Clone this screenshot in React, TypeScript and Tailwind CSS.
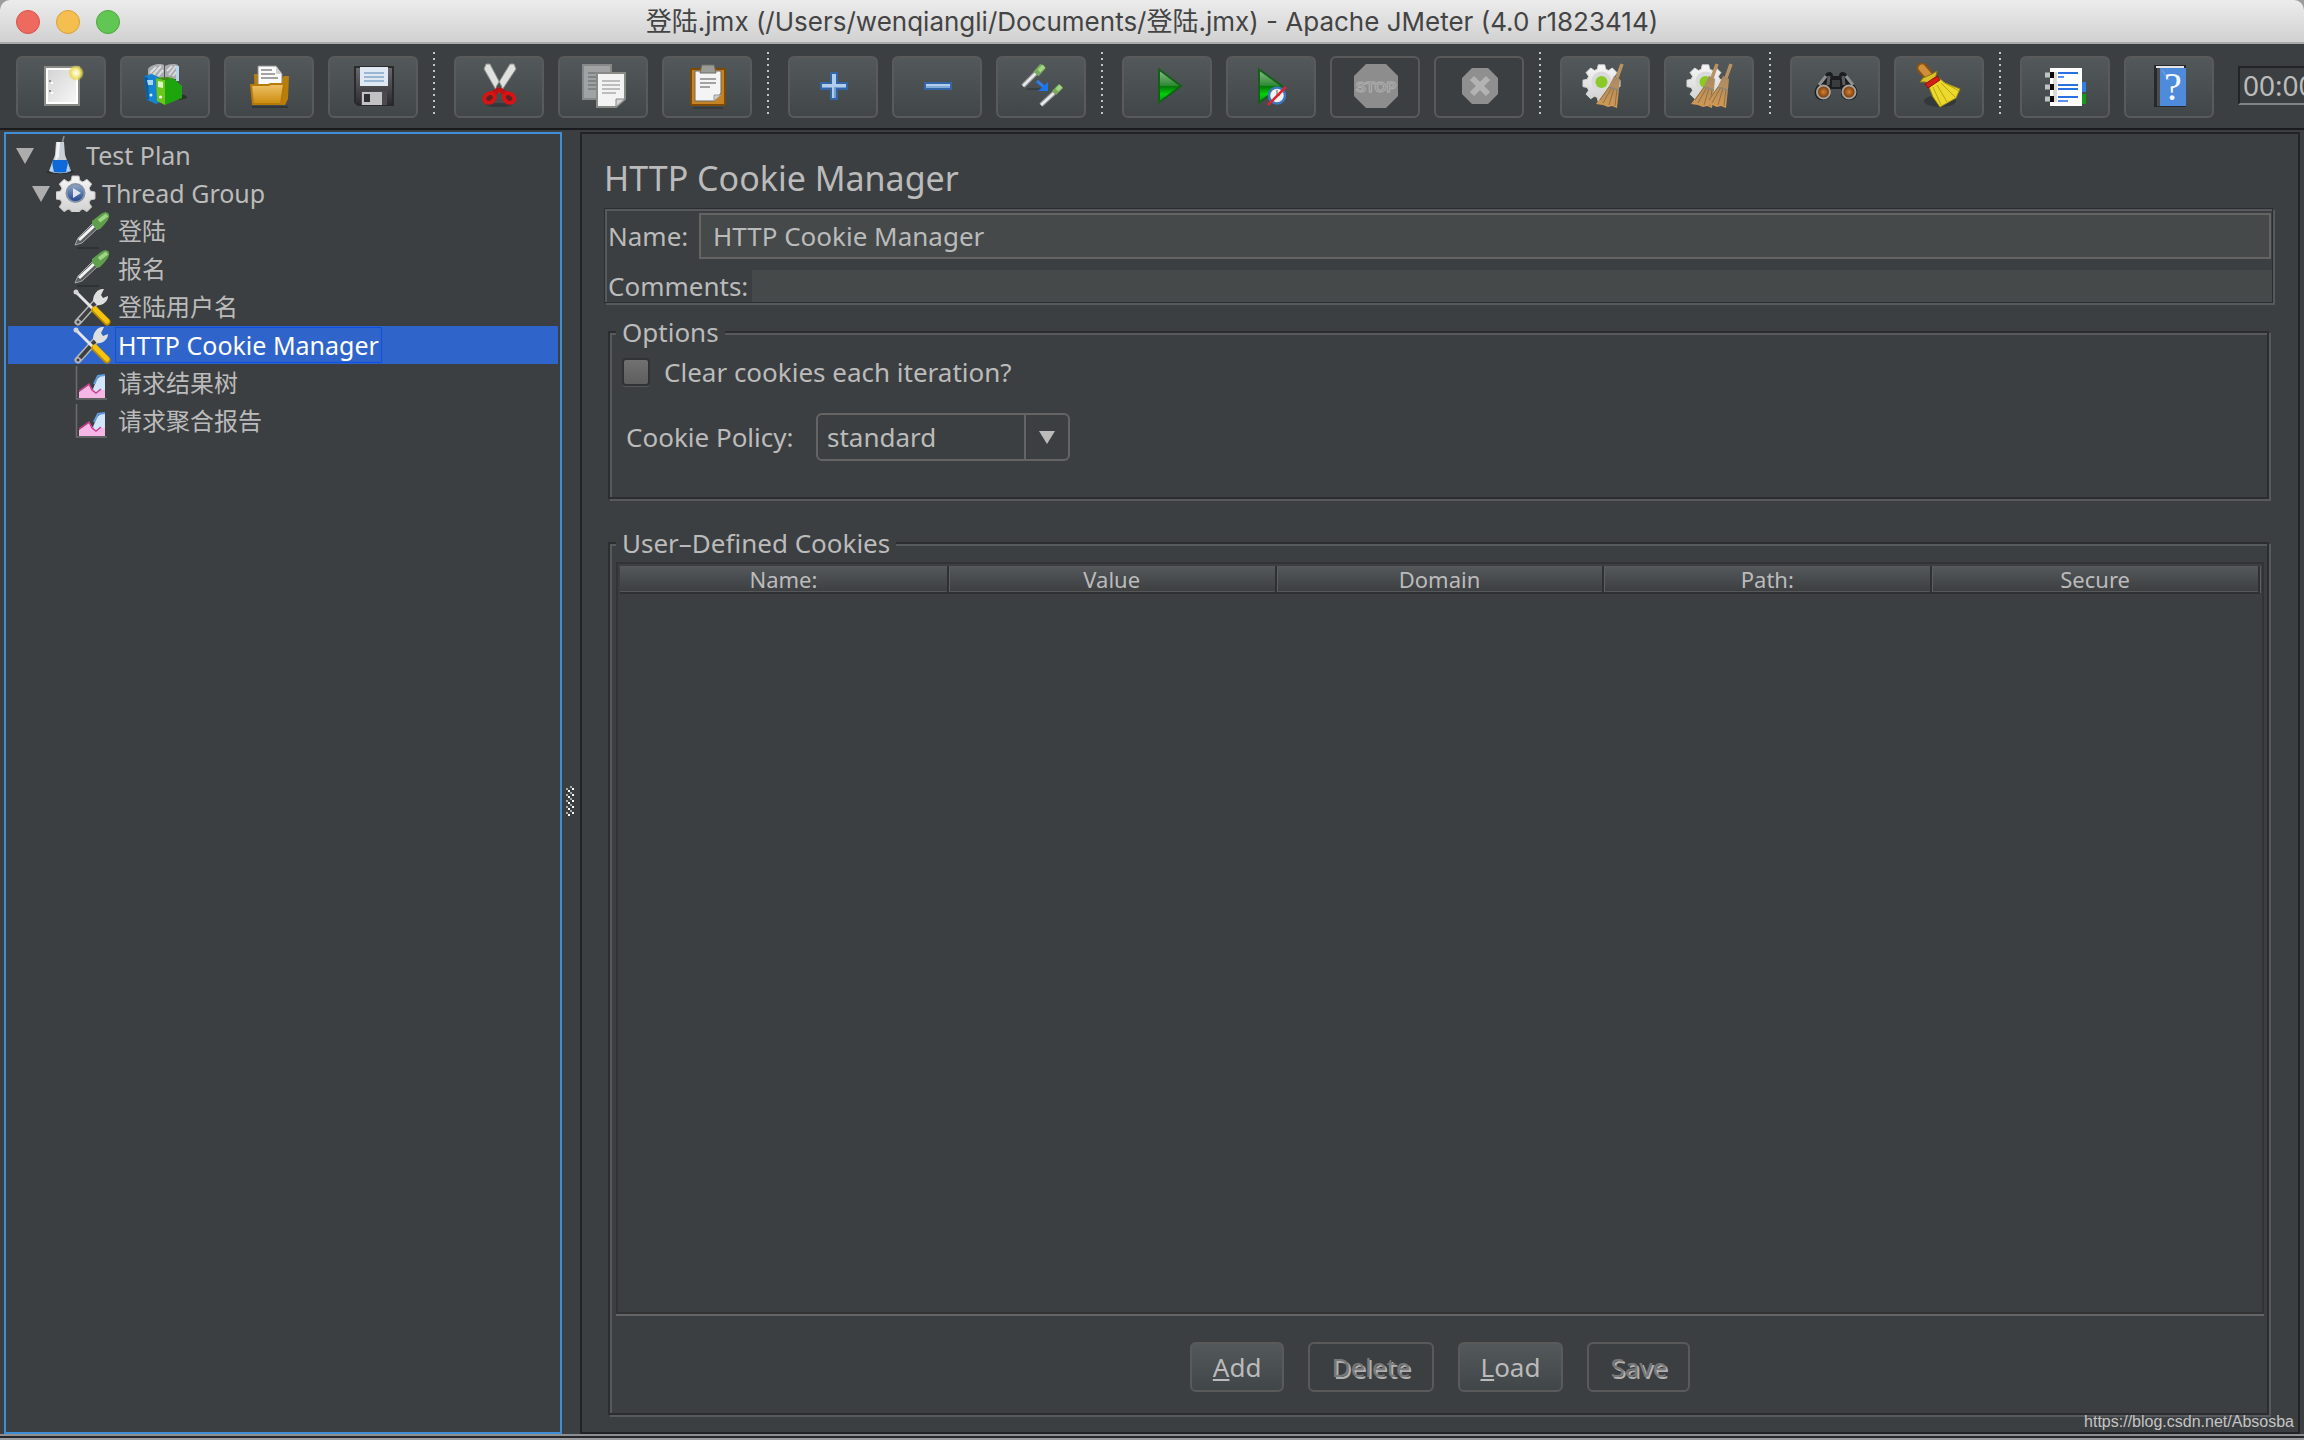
import { type ReactNode, useState } from "react";

const GEAR =
  "M-3.4-17h6.8l1 4.600 3 1.300 4-2.600 4.800 4.800-2.600 4 1.300 3 4.600 1v6.800l-4.600 1-1.300 3 2.600 4-4.800 4.800-4-2.600-3 1.300-1 4.600h-6.800l-1-4.600-3-1.300-4 2.600-4.800-4.800 2.600-4-1.300-3-4.600-1v-6.800l4.600-1 1.300-3-2.600-4 4.800-4.800 4 2.600 3-1.300z";

export default function App() {
  return (
    <div className="flex h-screen flex-col overflow-hidden bg-[#3c3f41] font-['Noto_Sans','Noto_Sans_CJK_SC',sans-serif] text-[#bbbbbb]">
      <IconDefs />
      <TitleBar />
      <Toolbar />
      <div className="flex min-h-0 flex-1 border-t-2 border-[#1a1b1c] pt-[2px] pr-1 pl-1">
        <TestTree />
        <Splitter />
        <CookieManager />
      </div>
      <div className="h-[6px] shrink-0 border-y-2 border-t-[#8b8d8e] border-b-[#9c9d9e] bg-[#25272a]" />
      <p className="absolute right-[10px] bottom-2 font-['Liberation_Sans',Arial,sans-serif] text-base leading-5 text-[#c4c4c4]">
        https://blog.csdn.net/Absosba
      </p>
    </div>
  );
}

function TitleBar() {
  return (
    <header className="h-11 shrink-0 bg-[#9a9c9d]">
      <div className="grid h-full grid-cols-[1fr_auto_1fr] items-center rounded-t-[10px] border-b-2 border-[#a9abab] bg-linear-to-b from-[#ececec] to-[#d1d1d1] px-4 pt-[2px]">
        <div className="flex gap-4">
          <button
            type="button"
            aria-label="Close"
            className="size-6 rounded-full border border-[#d6534b] bg-[#ee6a5f]"
          />
          <button
            type="button"
            aria-label="Minimize"
            className="size-6 rounded-full border border-[#d9a036] bg-[#f5bf4f]"
          />
          <button
            type="button"
            aria-label="Zoom"
            className="size-6 rounded-full border border-[#4fa73c] bg-[#62c655]"
          />
        </div>
        <h1 className="font-[Inter,'Noto_Sans_CJK_SC',sans-serif] text-[26px] leading-8 text-[#444444]">
          登陆.jmx (/Users/wenqiangli/Documents/登陆.jmx) - Apache JMeter (4.0
          r1823414)
        </h1>
      </div>
    </header>
  );
}

function Toolbar() {
  return (
    <div
      role="toolbar"
      className="flex h-[84px] shrink-0 items-start gap-[14px] overflow-hidden pt-3 pl-4">
      <ToolButton label="New">
        <NewIcon />
      </ToolButton>
      <ToolButton label="Templates">
        <TemplatesIcon />
      </ToolButton>
      <ToolButton label="Open">
        <OpenIcon />
      </ToolButton>
      <ToolButton label="Save">
        <SaveIcon />
      </ToolButton>
      <ToolSeparator />
      <ToolButton label="Cut">
        <CutIcon />
      </ToolButton>
      <ToolButton label="Copy">
        <CopyIcon />
      </ToolButton>
      <ToolButton label="Paste">
        <PasteIcon />
      </ToolButton>
      <ToolSeparator />
      <ToolButton label="Expand All">
        <path
          d="M22 10h6v10h10v6H28v10h-6V26H12v-6h10z"
          fill="#b3cdec"
          stroke="#3465a4"
          strokeWidth="2"
        />
        <path d="M13 24h10v1H13zM27 24h10v1H27zM25 24h2v11h-2z" fill="#729fcf" />
      </ToolButton>
      <ToolButton label="Collapse All">
        <path
          d="M12 20h26v6H12z"
          fill="#b3cdec"
          stroke="#3465a4"
          strokeWidth="2"
        />
        <path d="M13 23h24v2H13z" fill="#82abd9" />
      </ToolButton>
      <ToolButton label="Toggle">
        <ToggleIcon />
      </ToolButton>
      <ToolSeparator />
      <ToolButton label="Start">
        <path
          d="M16 6.500 38 23 16 39.500z"
          fill="url(#play)"
          stroke="#14601a"
          strokeWidth="2"
        />
      </ToolButton>
      <ToolButton label="Start no pauses">
        <path
          d="M12 6.500 35 23 12 39.500z"
          fill="url(#play)"
          stroke="#14601a"
          strokeWidth="2"
        />
        <circle cx="30" cy="32.500" r="8" fill="#f1f1f1" stroke="#3b78bd" strokeWidth="2.500" />
        <path d="M30 27v5h3" fill="none" stroke="#a9a9a9" strokeWidth="2" />
        <path d="M21 42 39 24" stroke="#dc2430" strokeWidth="2.500" />
      </ToolButton>
      <ToolButton label="Stop" disabled>
        <path d="M15 1h20l12 12v20L35 45H15L3 33V13z" fill="#8d8d8d" />
        <text
          x="25"
          y="29"
          textAnchor="middle"
          fill="#8d8d8d"
          stroke="#b0b0b0"
          strokeWidth="1"
          className="font-['Liberation_Sans',Arial,sans-serif] text-[15px] font-bold">
          STOP
        </text>
      </ToolButton>
      <ToolButton label="Shutdown" disabled>
        <path d="M17 5h16l10 10v16L33 41H17L7 31V15z" fill="#8f8f8f" />
        <path
          d="m17 15 16 16m0-16L17 31"
          stroke="#b3b3b3"
          strokeWidth="6"
        />
      </ToolButton>
      <ToolSeparator />
      <ToolButton label="Clear">
        <GearWithDot />
        <Whisk x={0} />
      </ToolButton>
      <ToolButton label="Clear All">
        <GearWithDot />
        <Whisk x={-9} />
        <Whisk x={5} />
      </ToolButton>
      <ToolSeparator />
      <ToolButton label="Search">
        <SearchIcon />
      </ToolButton>
      <ToolButton label="Reset Search">
        <BroomIcon />
      </ToolButton>
      <ToolSeparator />
      <ToolButton label="Function Helper Dialog">
        <NotebookIcon />
      </ToolButton>
      <ToolButton label="Help">
        <HelpIcon />
      </ToolButton>
      <output className="mt-[10px] ml-[10px] h-[39px] shrink-0 border-2 border-[#222426] border-b-[#7f8487] px-[3px] text-[28px] leading-[35px]">
        00:00:00
      </output>
    </div>
  );
}

function ToolButton({
  label,
  disabled = false,
  children,
}: {
  label: string;
  disabled?: boolean;
  children: ReactNode;
}) {
  return (
    <button
      type="button"
      aria-label={label}
      disabled={disabled}
      className="flex h-[62px] w-[90px] shrink-0 items-center justify-center rounded-md border-2 border-[#5a5a5a] bg-linear-to-b from-[#53585a] to-[#414648] disabled:bg-none">
      <svg viewBox="0 0 48 48" className="size-12">
        {children}
      </svg>
    </button>
  );
}

function ToolSeparator() {
  return (
    <svg viewBox="0 0 8 64" className="-mt-1 h-16 w-2 shrink-0">
      <path d="M2 0v64" stroke="#c2c4c5" strokeWidth="2" strokeDasharray="2 4" />
    </svg>
  );
}

// Gradients shared by the toolbar and tree icons
function IconDefs() {
  return (
    <svg className="absolute size-0">
      <defs>
        <linearGradient id="play" x1="0" y1="0" x2="0" y2="1">
          <stop offset="0" stopColor="#8cbf8e" />
          <stop offset="0.48" stopColor="#2f8a33" />
          <stop offset="0.52" stopColor="#027a05" />
          <stop offset="0.75" stopColor="#04cf0a" />
          <stop offset="1" stopColor="#0d8a12" />
        </linearGradient>
        <linearGradient id="page" x1="0" y1="0" x2="1" y2="1">
          <stop offset="0" stopColor="#d4d4d4" />
          <stop offset="1" stopColor="#f6f6f6" />
        </linearGradient>
        <linearGradient id="folder" x1="0" y1="0" x2="0" y2="1">
          <stop offset="0" stopColor="#eec269" />
          <stop offset="1" stopColor="#cb8b0c" />
        </linearGradient>
        <linearGradient id="floppy" x1="0" y1="0" x2="0" y2="1">
          <stop offset="0" stopColor="#6a6a6e" />
          <stop offset="1" stopColor="#2c2a2d" />
        </linearGradient>
        <linearGradient id="straw" x1="0" y1="0" x2="0" y2="1">
          <stop offset="0" stopColor="#a98963" />
          <stop offset="1" stopColor="#d19a55" />
        </linearGradient>
        <linearGradient id="gear" x1="0" y1="0" x2="0" y2="1">
          <stop offset="0" stopColor="#f7f7f7" />
          <stop offset="1" stopColor="#cfcfcf" />
        </linearGradient>
        <linearGradient id="lens" x1="0" y1="0" x2="0" y2="1">
          <stop offset="0" stopColor="#93abcb" />
          <stop offset="1" stopColor="#1c4288" />
        </linearGradient>
        <radialGradient id="glow">
          <stop offset="0" stopColor="#fffef0" />
          <stop offset="0.45" stopColor="#f5ec98" />
          <stop offset="0.75" stopColor="#e6d84a" stopOpacity="0.8" />
          <stop offset="1" stopColor="#e6d84a" stopOpacity="0" />
        </radialGradient>
        <radialGradient id="orange">
          <stop offset="0" stopColor="#d9812f" />
          <stop offset="1" stopColor="#6b3109" />
        </radialGradient>
      </defs>
    </svg>
  );
}

function NewIcon() {
  return (
    <>
      <path d="M8 4h34v38H8z" fill="#fff" stroke="#888a85" strokeWidth="2" />
      <path d="M11 7h28v32H11z" fill="url(#page)" />
      <path d="M12 17h2v2h-2zM12 27h2v2h-2z" fill="#8f8f8f" />
      <path d="M14 19h2v2h-2zM14 29h2v2h-2z" fill="#fff" />
      <circle cx="39" cy="10" r="8" fill="url(#glow)" />
    </>
  );
}

function TemplatesIcon() {
  return (
    <>
      <ellipse cx="36" cy="34" rx="10" ry="3" fill="#2c3031" />
      <path d="M7 6c3-5 13-6 16-4v14L7 17zM24 3c3-2 10-3 13-1l1 14H24z" fill="#a9acae" />
      <path d="m9 10 6-6m-3 8 8-9m-3 10 5-6m4 1 5-5m-3 9 7-9m-3 10 4-5" stroke="#dadcdd" strokeWidth="2" />
      <path d="M35 3h3v15h-3z" fill="#b8d4e8" />
      <path d="m3 13 8-2 8 4v24l-4 2-9-4z" fill="#1583cf" />
      <path d="m3 13 4 2 1 22-2-1z" fill="#0b5c9c" />
      <path d="M6 17h6v5H7z" fill="#a9d6f5" />
      <path d="m15 15 9 2v25l-8-4z" fill="#6bc51a" />
      <path d="m24 17 8-2 9 8v12l-17 7z" fill="#1ea40c" />
      <path d="m15 15 11-1 6 1-8 2z" fill="#3c8f0e" />
      <path d="m17 18 5 1v6l-5-1z" fill="#dff5c8" />
      <circle cx="19.500" cy="34" r="1.500" fill="#fff" />
      <circle cx="10" cy="32" r="1.500" fill="#d5ecfb" />
    </>
  );
}

function OpenIcon() {
  return (
    <>
      <path d="M7 43h36v2H7z" fill="#333638" />
      <path d="M9 11h8l3 4h17l2-2h5l-1 23-3 6H10z" fill="#b97d09" />
      <path d="M13 3h18l6 8v12H13z" fill="#fafafa" stroke="#8b8b8b" />
      <path d="M16 7h11M16 11h14M16 15h17" stroke="#a3a3a3" strokeWidth="2" />
      <path d="m31 3 6 8h-6z" fill="#cfcfcf" />
      <path d="M6 22h17l3-1h13l-3 20H8z" fill="url(#folder)" stroke="#b67a08" strokeWidth="2" />
    </>
  );
}

function SaveIcon() {
  return (
    <>
      <path d="M6 4h38v38H9l-3-3z" fill="url(#floppy)" stroke="#2a2a2c" strokeWidth="2" />
      <path d="M11 4h28v19H11z" fill="#dfe9f3" />
      <path d="M15 10h20M15 14h20M15 18h20" stroke="#9ab6d3" strokeWidth="2" />
      <path d="M12 28h26v14H12z" fill="#4b494c" />
      <path d="M13 29h20v13H13z" fill="#c2c2c4" />
      <path d="M15 31h6v8h-6z" fill="#2f2f31" />
    </>
  );
}

function CutIcon() {
  return (
    <>
      <ellipse cx="24" cy="42" rx="13" ry="2" fill="#33383a" />
      <path d="M11 1h4l12 23-3 6-3-3L9 6zM39 1h-4L21 24l3 6 3-3L41 6z" fill="#dfe1df" stroke="#8e908c" />
      <path d="M24 26 16 33m8-7 9 7" stroke="#c01010" strokeWidth="5" />
      <ellipse cx="14.500" cy="35" rx="5.500" ry="4.500" fill="#5d2222" stroke="#d61414" strokeWidth="4" transform="rotate(-35 14.500 35)" />
      <ellipse cx="34" cy="35" rx="5.500" ry="4.500" fill="#5d2222" stroke="#d61414" strokeWidth="4" transform="rotate(35 34 35)" />
    </>
  );
}

function CopyIcon() {
  return (
    <>
      <path d="M4 2h28v34H4z" fill="#a0a3a3" stroke="#868988" strokeWidth="2" />
      <path d="M9 10h14M9 14h14M9 18h14M9 22h14M9 26h14" stroke="#808383" strokeWidth="2" />
      <path d="M18 10h28v26l-9 8H18z" fill="#f3f3f3" stroke="#888a85" strokeWidth="2" />
      <path d="M23 18h18M23 22h18M23 26h18M23 30h14" stroke="#bdbdbd" strokeWidth="2" />
      <path d="M37 44v-8h9z" fill="#d3d3d3" stroke="#888a85" />
    </>
  );
}

function PasteIcon() {
  return (
    <>
      <path d="M10 44h30v2H10z" fill="#373b3d" />
      <rect x="8" y="6" width="34" height="36" rx="1" fill="#c68326" stroke="#7d4a05" strokeWidth="2" />
      <path d="M12 8h26v22l-7 8H12z" fill="#f4f4f4" stroke="#6e6a62" />
      <path d="M19 2h12l2 8H17z" fill="#9b9d94" stroke="#6d6f68" />
      <path d="M17 16h16M17 20h16M17 24h10" stroke="#a2a2a2" strokeWidth="2" />
      <path d="M31 38v-6h7z" fill="#cfcfcf" stroke="#9a9a9a" />
    </>
  );
}

function ToggleIcon() {
  return (
    <>
      <path d="M10 26h16" stroke="#3a3f40" strokeWidth="2" />
      <path d="M6 23 19 10M24 42l13-12" stroke="#8f9393" strokeWidth="5" />
      <path d="M6 23 19 10M24 42l13-12" stroke="#e9eaea" strokeWidth="2.500" />
      <path d="m19 11 7-8" stroke="#78a95f" strokeWidth="7" />
      <path d="m37 30 7-7" stroke="#78a95f" strokeWidth="6" />
      <path d="m22 8 5-5m13 24 4-4" stroke="#a0d77e" strokeWidth="4" />
      <path d="m20 18 7 6" stroke="#2f7be8" strokeWidth="3" />
      <path d="M31 19v9H21z" fill="#1f74ee" />
    </>
  );
}

function GearWithDot() {
  return (
    <>
      <path d={GEAR} transform="translate(20.500 18) scale(0.95)" fill="url(#gear)" stroke="#d8d8d8" />
      <circle cx="20.500" cy="18.500" r="10" fill="#d9dad9" />
      <circle cx="20.500" cy="19" r="6" fill="#8ac926" />
    </>
  );
}

function Whisk({ x }: { x: number }) {
  return (
    <g transform={`translate(${x} 0)`}>
      <path d="m41 1-5 14" stroke="#b99263" strokeWidth="3.500" />
      <path d="m33 13 6 3-1 10-2 19-5-2-4 1-5-2-7-1 12-16z" fill="url(#straw)" />
      <path d="m31 24-9 16m11-15-5 17m8-16-2 17m-6-19-9 13" stroke="#94703f" />
      <path d="m28 24 10 3" stroke="#8d8878" strokeWidth="1.500" />
    </g>
  );
}

function SearchIcon() {
  return (
    <>
      <path d="M14 12c2-4 8-4 8 1h6c0-5 6-5 8-1l8 11c3 4 3 8 1 11-4 5-12 4-15-2v-6h-10v6c-3 6-11 7-15 2-2-3-2-7 1-11z" fill="#1c1d1e" />
      <path d="m15 13-7 9m27-9 7 9" stroke="#8e9092" strokeWidth="3" />
      <path d="m18 13-1 9m15-9 1 9" stroke="#5b5d5f" strokeWidth="3" />
      <path d="M21 17h8v7h-8z" fill="#3a3c3e" />
      <circle cx="12.500" cy="29" r="6.500" fill="url(#orange)" stroke="#a6a29d" strokeWidth="2" />
      <circle cx="38" cy="29" r="6.500" fill="url(#orange)" stroke="#a6a29d" strokeWidth="2" />
    </>
  );
}

function BroomIcon() {
  return (
    <>
      <ellipse cx="25" cy="38" rx="16" ry="6" fill="#33383a" />
      <path d="m7 5 6 7" stroke="#8a5310" strokeWidth="11" strokeLinecap="round" />
      <path d="m7 5 6 7" stroke="#cf8f3c" strokeWidth="7" strokeLinecap="round" />
      <path d="m5 19 3-4 9-4 5-3-1 5 3 3-10 8-3-5z" fill="#d8c22a" stroke="#8b7a10" />
      <path d="m14 24 10-9 6 5 15 6-4 9-16 9-7-10z" fill="#ecd92c" stroke="#a08d10" />
      <path d="m18 24 8 18m-4-20 10 17m-6-19 14 14m-12-15 16 9" stroke="#b7a416" />
      <path d="m10 21 12-8 3 4-12 8z" fill="#d41f17" stroke="#8f0d0a" />
    </>
  );
}

function NotebookIcon() {
  return (
    <>
      <path d="M41 19h4v10h-4z" fill="#2f7fe8" />
      <path d="M41 31h4v10h-4z" fill="#159a16" />
      <path d="M9 5h32v38H9z" fill="#fff" />
      <path d="M12 9h4v30h-4z" fill="#dcdcdc" />
      <path d="M17 10h20M17 22h20M17 26h20M17 34h20" stroke="#2a6fe0" strokeWidth="2" />
      <path d="M17 14h6M17 38h10" stroke="#5b92ee" strokeWidth="2" />
      <path d="M4 12h6M4 24h6M4 36h6" stroke="#c2c2c2" strokeWidth="5" />
      <path d="M9 12h4M9 24h4M9 36h4" stroke="#0b0b0b" strokeWidth="6" />
    </>
  );
}

function HelpIcon() {
  return (
    <>
      <path d="M9 2h32v42H9z" fill="#26282b" />
      <path d="M12 5h3v38h-3z" fill="#4b4c4e" />
      <path d="M15 5h26v38H15z" fill="#4f8bdb" />
      <path d="M11 3h28v2H11z" fill="#e6e6e6" />
      <path d="m17 7 7 10" stroke="#7eabe8" />
      <text
        x="28"
        y="37"
        textAnchor="middle"
        fill="#f4f8fd"
        className="font-['Liberation_Serif',serif] text-[40px]">
        ?
      </text>
    </>
  );
}

type TreeNode = {
  name: string;
  depth: 0 | 1 | 2;
  icon: ReactNode;
};

const nodes: TreeNode[] = [
  { name: "Test Plan", depth: 0, icon: <FlaskIcon /> },
  { name: "Thread Group", depth: 1, icon: <ThreadGroupIcon /> },
  { name: "登陆", depth: 2, icon: <PipetteIcon /> },
  { name: "报名", depth: 2, icon: <PipetteIcon /> },
  { name: "登陆用户名", depth: 2, icon: <ToolsIcon /> },
  { name: "HTTP Cookie Manager", depth: 2, icon: <ToolsIcon /> },
  { name: "请求结果树", depth: 2, icon: <ChartIcon /> },
  { name: "请求聚合报告", depth: 2, icon: <ChartIcon /> },
];

const indents = ["pl-2", "pl-6", "pl-10"];

// Latin names are set a touch larger than Chinese ones
const isLatin = (name: string) => /^[\w ]+$/.test(name);

function TestTree() {
  const [selected, setSelected] = useState("HTTP Cookie Manager");

  return (
    <ul
      role="tree"
      className="w-[558px] shrink-0 border-2 border-[#3d8ed4] p-[2px]">
      {nodes.map(({ name, depth, icon }) => (
        <li
          key={name}
          role="treeitem"
          aria-selected={name === selected}
          onClick={() => setSelected(name)}
          className={`flex h-[38px] items-center ${indents[depth]} ${
            name === selected ? "bg-[#2f65ca] text-white" : ""
          }`}>
          <svg viewBox="0 0 24 38" className="h-[38px] w-6 shrink-0">
            {depth < 2 && <path d="M0 12h18L9 28z" fill="#adadad" />}
          </svg>
          <svg viewBox="0 0 40 38" className="h-[38px] w-10 shrink-0">
            {icon}
          </svg>
          <span
            className={`ml-[3px] border px-[2px] leading-[34px] whitespace-nowrap ${
              isLatin(name) ? "text-[25px]" : "text-[24px]"
            } ${name === selected ? "border-[#1050e0]" : "border-transparent"}`}>
            {name}
          </span>
        </li>
      ))}
    </ul>
  );
}

function FlaskIcon() {
  return (
    <>
      <ellipse cx="20" cy="36" rx="14" ry="2" fill="#2d3032" />
      <path d="m24 0-2 8" stroke="#8b8d8e" strokeWidth="1.500" />
      <path d="M16 6h8l1 13 6 16c-5 3-16 3-22 0l6-16z" fill="#c9cfd6" />
      <path d="M17 6h3l-1 15-4 5z" fill="#f1f3f5" />
      <path d="M13 24h14l3 11c-5 2-14 2-19 0z" fill="#0f69d8" />
      <path d="m12 27-2 8 4 1zM28 27l2 8-4 1z" fill="#b5d3f5" />
    </>
  );
}

function ThreadGroupIcon() {
  return (
    <>
      <path d={GEAR} transform="translate(19.500 19)" fill="url(#gear)" stroke="#c4c4c4" />
      <circle cx="19.500" cy="19" r="9" fill="url(#lens)" stroke="#8392a8" strokeWidth="2" />
      <path d="m17 14 8 5-8 5z" fill="#dfe6f0" />
    </>
  );
}

function PipetteIcon() {
  return (
    <>
      <path d="M5 36h22" stroke="#2f3234" strokeWidth="2" />
      <path d="m3 33 3-7 14-14 5 5-15 14z" fill="#5c5f60" stroke="#a3a6a6" />
      <path d="M7 28 22 14" stroke="#f2f3f3" strokeWidth="3" />
      <path d="m20 9 9-7c4-3 9-2 8 3-1 4-5 8-9 12l-3 1-5-6z" fill="#5f9f4c" />
      <path d="m27 9 8-6" stroke="#9fd487" strokeWidth="4" />
    </>
  );
}

function ToolsIcon() {
  return (
    <>
      <path d="M6 34 25 13" stroke="#b5b7b7" strokeWidth="7" strokeLinecap="round" />
      <path d="M8 32 24 14" stroke="#3d3f41" strokeWidth="4" />
      <path d="M21 13c0-7 5-13 11-12l-3 6 2 3 5-2c0 6-6 10-11 9z" fill="#dedfdf" />
      <path d="m3 3 20 20" stroke="#e4e5e5" strokeWidth="3" />
      <circle cx="4" cy="4" r="2.500" fill="#d3d4d5" />
      <path d="m23 22 12 12" stroke="#b98a04" strokeWidth="7" strokeLinecap="round" />
      <path d="m23 21 12 12" stroke="#f6c40e" strokeWidth="5" strokeLinecap="round" />
      <circle cx="6" cy="34" r="1.500" fill="#3d3f41" />
    </>
  );
}

function ChartIcon() {
  return (
    <>
      <path d="M4.500 2v33H35" fill="none" stroke="#6b6c6d" strokeWidth="1.500" />
      <path d="m21 25 4-10 5-4h3v19l-8 2z" fill="#d3e5fa" />
      <path d="m22 20 4-8 7-1" fill="none" stroke="#5f9be0" strokeWidth="2" />
      <path d="M7 34v-6l10-7 7 8 4-3h5v8z" fill="#f6b7e6" />
      <path d="m7 27 10-7 3 6 4 3 5-4" fill="none" stroke="#cf3f93" strokeWidth="1.500" />
    </>
  );
}

function Splitter() {
  return (
    <div className="flex w-[18px] shrink-0 items-center pt-9 pl-1">
      <svg viewBox="0 0 8 30" className="h-[30px] w-2">
        {[0, 6, 12, 18, 24].map((y) => (
          <g key={y}>
            <path d={`M0 ${y + 2}h2v2H0zM4 ${y}h2v2H4z`} fill="#a6a8a9" />
            <path d={`M2 ${y + 4}h2v2H2zM6 ${y + 2}h2v2H6z`} fill="#fff" />
          </g>
        ))}
      </svg>
    </div>
  );
}

function CookieManager() {
  return (
    <main className="flex min-w-0 flex-1 flex-col border-2 border-[#212325] pt-6 pr-[25px] pb-[17px] pl-[22px]">
      <h2 className="text-[34px] leading-10">HTTP Cookie Manager</h2>

      <div className="mt-[10px] flex flex-col gap-[11px] border border-[#2b2d2f] pt-1 pl-[3px] shadow-[2px_2px_0_#575a5c,inset_2px_2px_0_#575a5c]">
        <div className="flex items-center pr-px">
          <label htmlFor="name" className="w-[91px] text-[26px] leading-8">
            Name:
          </label>
          <input
            id="name"
            defaultValue="HTTP Cookie Manager"
            className="h-[46px] min-w-0 flex-1 border-2 border-[#646464] bg-[#45494a] px-3 text-[26px] leading-8"
          />
        </div>
        <div className="flex items-center">
          <label htmlFor="comments" className="w-[144px] text-[26px] leading-8">
            Comments:
          </label>
          <input
            id="comments"
            className="h-8 min-w-0 flex-1 bg-[#45494a] text-[26px] leading-8"
          />
        </div>
      </div>

      <Group title="Options" className="mt-[11px]">
        <label className="mt-[6px] ml-[6px] flex items-center gap-[14px] self-start text-[26px] leading-8">
          <input
            type="checkbox"
            className="size-7 appearance-none rounded-sm border-2 border-[#303234] bg-linear-to-b from-[#717171] to-[#5e5e5e] shadow-[0_1px_0_#54585a] checked:from-[#9a9a9a]"
          />
          Clear cookies each iteration?
        </label>
        <div className="mt-[25px] mb-9 ml-[10px] flex items-center gap-3 text-[26px] leading-8">
          <label htmlFor="policy" className="w-[178px]">
            Cookie Policy:
          </label>
          <div className="relative">
            <select
              id="policy"
              className="h-12 w-[254px] appearance-none rounded-md border-2 border-[#646464] bg-[#3c3f41] pl-[9px] leading-8">
              <option>standard</option>
            </select>
            <svg
              viewBox="0 0 46 48"
              className="pointer-events-none absolute top-0 right-0 h-12 w-[46px]">
              <path d="M1 1v46" stroke="#646464" strokeWidth="2" />
              <path d="M15 18h16l-8 13z" fill="#bbbbbb" />
            </svg>
          </div>
        </div>
      </Group>

      <Group
        title="User–Defined Cookies"
        className="mt-[26px] min-h-0 flex-1">
        <div className="mt-px flex-1 border-2 border-[#313335] p-[2px] shadow-[0_2px_0_#646567]">
          <CookieTable />
        </div>
        <div className="mt-7 mb-[21px] flex justify-center gap-6">
          <ActionButton>
            <u>A</u>dd
          </ActionButton>
          <ActionButton disabled>Delete</ActionButton>
          <ActionButton>
            <u>L</u>oad
          </ActionButton>
          <ActionButton disabled>Save</ActionButton>
        </div>
      </Group>
    </main>
  );
}

function Group({
  title,
  className,
  children,
}: {
  title: string;
  className: string;
  children: ReactNode;
}) {
  return (
    <fieldset
      className={`mr-1 ml-1 flex min-w-0 flex-col border-2 border-[#2b2d2f] pr-[3px] pl-[6px] shadow-[2px_2px_0_#575a5c,inset_2px_2px_0_#575a5c] ${className}`}>
      <legend className="relative bg-[#3c3f41] px-[6px] text-[26px] leading-9">
        {title}
      </legend>
      {children}
    </fieldset>
  );
}

function CookieTable() {
  return (
    <table className="w-full table-fixed">
      <thead>
        <tr className="h-[27px] border-b-2 border-[#2e3032] bg-linear-to-b from-[#55595c] to-[#3d3f41]">
          {["Name:", "Value", "Domain", "Path:", "Secure"].map((column) => (
            <th
              key={column}
              className="border-r-2 border-[#2e3032] p-0 text-[22px] leading-[25px] font-normal shadow-[2px_0_0_#5b5f61]">
              {column}
            </th>
          ))}
        </tr>
      </thead>
    </table>
  );
}

function ActionButton({
  disabled = false,
  children,
}: {
  disabled?: boolean;
  children: ReactNode;
}) {
  return (
    <button
      type="button"
      disabled={disabled}
      className="h-[50px] rounded-md border-2 border-[#5a5a5a] bg-linear-to-b from-[#53585a] to-[#414648] px-[21px] text-[26px] leading-8 disabled:bg-none disabled:text-[#777777] disabled:text-shadow-[2px_2px_0_#b0b0b0]">
      {children}
    </button>
  );
}
